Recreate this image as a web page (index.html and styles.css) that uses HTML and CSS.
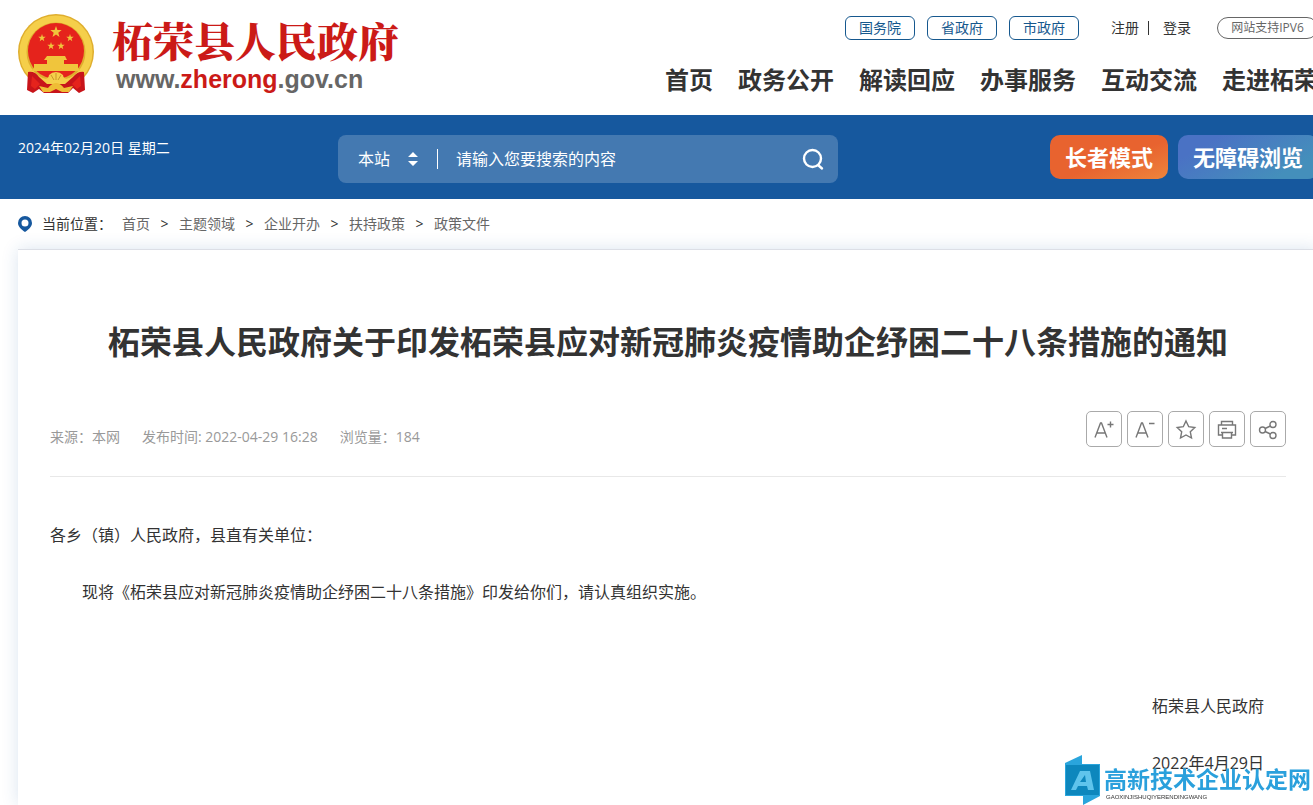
FILE: index.html
```html
<!DOCTYPE html>
<html lang="zh-CN">
<head>
    <meta charset="UTF-8">
    <meta name="viewport" content="width=device-width, initial-scale=1.0">
    <title>柘荣县人民政府</title>
    <link rel="stylesheet" href="styles.css">
</head>
<body>
    <header class="header wrap">
        <a class="logo" href="#">
            <svg class="emblem" viewBox="0 0 76 80" width="76" height="80" aria-hidden="true">
                <defs>
                    <path id="star" d="M0-6 1.4-1.9 5.7-1.9 2.3.7 3.5 4.9 0 2.4-3.5 4.9-2.3.7-5.7-1.9-1.4-1.9z"/>
                </defs>
                <circle cx="38" cy="38" r="38" fill="#dfae2e"/>
                <circle cx="38" cy="38" r="33" fill="none" stroke="#f5cf4a" stroke-width="7"/>
                <circle cx="38" cy="37" r="28" fill="#e5231c"/>
                <g fill="#f0c53c">
                    <use href="#star" transform="translate(38 18)"/>
                    <use href="#star" transform="translate(24 24) scale(.65)"/>
                    <use href="#star" transform="translate(52 24) scale(.65)"/>
                    <use href="#star" transform="translate(33 32) scale(.65)"/>
                    <use href="#star" transform="translate(43 32) scale(.65)"/>
                    <path d="M29 42H47L49 46H46V50H60V54L63 57H13L16 54V50H29V46H26z"/>
                </g>
                <path fill="#c8141a" d="M10 58Q17 57 21 63L29 70H47L55 63Q60 57 66 58L67 76 61 79 55 74 50 79H26L21 75 15 79 9 76z"/>
                <path fill="#e5231c" d="M14 62 22 70 17 75 13 72zM62 62 54 70 59 75 63 72z"/>
                <path fill="#f5cf4a" d="M21 62Q30 68 31 61Q34 58 38 58Q42 58 45 61Q46 68 55 62L46 69H30z"/>
                <path fill="#efbd35" d="M21 72 30 74Q34 69 38 69Q42 69 46 74L55 72 51 78H44L38 75 32 78H25z"/>
                <path fill="none" stroke="#c9952a" d="M38 59V66M33 61 36 66M43 61 40 66"/>
            </svg>
            <span class="logo-text">
                <span class="logo-name">柘荣县人民政府</span>
                <span class="logo-url">www.<em>zherong</em>.gov.cn</span>
            </span>
        </a>
        <div class="header-right">
            <div class="top-links">
                <a class="gov-link" href="#">国务院</a>
                <a class="gov-link" href="#">省政府</a>
                <a class="gov-link" href="#">市政府</a>
                <div class="account">
                    <a href="#">注册</a>
                    <a href="#">登录</a>
                </div>
                <a class="ipv6" href="#">网站支持IPV6</a>
            </div>
            <nav class="nav">
                <a href="#">首页</a>
                <a href="#">政务公开</a>
                <a href="#">解读回应</a>
                <a href="#">办事服务</a>
                <a href="#">互动交流</a>
                <a href="#">走进柘荣</a>
            </nav>
        </div>
    </header>

    <div class="bar">
        <div class="bar-inner wrap">
            <div class="date">2024年02月20日 星期二</div>
            <form class="search">
                <select class="search-scope" aria-label="搜索范围">
                    <option>本站</option>
                </select>
                <svg class="search-arrows" viewBox="0 0 10 14" width="10" height="14" aria-hidden="true">
                    <path fill="#fff" d="M5 0 10 5H0zM5 14 10 9H0z"/>
                </svg>
                <input class="search-input" type="text" placeholder="请输入您要搜索的内容" aria-label="搜索内容">
                <button class="search-btn" type="submit" aria-label="搜索">
                    <svg viewBox="0 0 24 24" width="24" height="24" fill="none" stroke="#fff" stroke-width="2.4" stroke-linecap="round">
                        <circle cx="10.500" cy="11.500" r="8.500"/>
                        <path d="M16 18 20 21.500"/>
                    </svg>
                </button>
            </form>
            <div class="modes">
                <button class="mode mode-elder" type="button">长者模式</button>
                <button class="mode mode-access" type="button">无障碍浏览</button>
            </div>
        </div>
    </div>

    <nav class="crumbs wrap" aria-label="当前位置">
        <svg viewBox="0 0 14 16" width="14" height="16" aria-hidden="true">
            <path fill="#16589e" fill-rule="evenodd" d="M7 0a7 7 0 0 0-7 7C0 11 4 14 7 16 10 14 14 11 14 7A7 7 0 0 0 7 0zM7 3.500a3.500 3.500 0 1 1 0 7 3.500 3.500 0 0 1 0-7z"/>
        </svg>
        <span class="crumbs-label">当前位置：</span>
        <a href="#">首页</a><span class="sep">&gt;</span>
        <a href="#">主题领域</a><span class="sep">&gt;</span>
        <a href="#">企业开办</a><span class="sep">&gt;</span>
        <a href="#">扶持政策</a><span class="sep">&gt;</span>
        <a href="#">政策文件</a>
    </nav>

    <main class="article wrap">
        <h1>柘荣县人民政府关于印发柘荣县应对新冠肺炎疫情助企纾困二十八条措施的通知</h1>
        <div class="info">
            <div class="meta">
                <span>来源：本网</span>
                <span>发布时间: 2022-04-29 16:28</span>
                <span>浏览量：184</span>
            </div>
            <div class="tools">
                <button type="button" aria-label="放大字体">
                    <svg viewBox="0 0 24 24"><path d="M3 20.500 8.500 6H9.500L15 20.500M5 16H13M15.500 7.500H21.500M18.500 4.500V10.500"/></svg>
                </button>
                <button type="button" aria-label="缩小字体">
                    <svg viewBox="0 0 24 24"><path d="M3 20.500 8.500 6H9.500L15 20.500M5 16H13M16 6.500H21.500"/></svg>
                </button>
                <button type="button" aria-label="收藏">
                    <svg viewBox="0 0 24 24"><path d="M12 4 14.700 9.700 20.800 10.500 16.300 14.800 17.500 21 12 18 6.500 21 7.700 14.800 3.200 10.500 9.300 9.700z"/></svg>
                </button>
                <button type="button" aria-label="打印">
                    <svg viewBox="0 0 24 24"><path d="M6.500 8V4.500H17.500V8M7 18H3.500V8H20.500V18H17M6 15.500H18M7.500 15.500V21H16.500V15.500M7 11.500H12"/></svg>
                </button>
                <button type="button" aria-label="分享">
                    <svg viewBox="0 0 24 24"><circle cx="6.500" cy="13" r="3"/><circle cx="17" cy="7.500" r="3"/><circle cx="17" cy="18.500" r="3"/><path d="M9.100 11.500 14.400 9M9.100 14.500 14.400 17"/></svg>
                </button>
            </div>
        </div>
        <div class="content">
            <p>各乡（镇）人民政府，县直有关单位：</p>
            <p class="indent">现将《柘荣县应对新冠肺炎疫情助企纾困二十八条措施》印发给你们，请认真组织实施。</p>
            <div class="sign">
                <p>柘荣县人民政府</p>
                <p>2022年4月29日</p>
            </div>
        </div>
    </main>

    <div class="watermark">
        <svg viewBox="0 0 35 50" width="35" height="50" aria-hidden="true">
            <path fill="#2aa5dc" d="M0 8 17 0V9H35V41L18 50V41H0z"/>
            <path fill="#0d87bd" d="M1 10H34V40H1z"/>
            <path fill="#5fc4ec" fill-rule="evenodd" d="M6 35 15 16H25L29 35H23L22 31H13L11 35zM15 27H21L20 20z"/>
        </svg>
        <div class="watermark-text">
            <strong>高新技术企业认定网</strong>
            <small>GAOXINJISHUQIYERENDINGWANG</small>
        </div>
    </div>
</body>
</html>
```

FILE: styles.css
```css
* {
    box-sizing: border-box;
    margin: 0;
    padding: 0;
}
body {
    font-family: "Open Sans", "Noto Sans CJK SC", sans-serif;
    font-size: 14px;
    line-height: 20px;
    color: #333;
    background: #fff;
    overflow-x: hidden;
}
a {
    color: inherit;
    text-decoration: none;
}
button, input, select {
    font: inherit;
    color: inherit;
    border: none;
    background: none;
}
button {
    cursor: pointer;
}
.wrap {
    min-width: 1300px;
    margin: 0 18px;
}

/* header */
.header {
    display: flex;
    justify-content: space-between;
    height: 115px;
}
.logo {
    display: flex;
    gap: 18px;
    padding-top: 14px;
}
.logo-text {
    display: flex;
    flex-direction: column;
}
.logo-name {
    font-family: "Noto Serif CJK SC", "Noto Sans CJK SC", serif;
    font-size: 41px;
    font-weight: 900;
    line-height: 52px;
    color: #cb1a17;
}
.logo-url {
    padding-left: 4px;
    font-family: "Liberation Sans", sans-serif;
    font-size: 25px;
    font-weight: bold;
    line-height: 26px;
    color: #666;
}
.logo-url em {
    font-style: normal;
    color: #cb1a17;
}
.header-right {
    display: flex;
    flex-direction: column;
    align-items: flex-end;
    gap: 22px;
    padding-top: 16px;
}
.top-links {
    display: flex;
    align-items: center;
    gap: 12px;
}
.gov-link {
    width: 70px;
    border: 1px solid #16588e;
    border-radius: 6px;
    line-height: 22px;
    text-align: center;
    color: #16588e;
}
.account {
    display: flex;
    align-items: center;
    margin: 0 14px 0 20px;
}
.account a + a {
    margin-left: 9px;
    padding-left: 14px;
    border-left: 1px solid #333;
    line-height: 14px;
}
.ipv6 {
    width: 101px;
    border: 1px solid #666;
    border-radius: 11px;
    font-size: 12px;
    line-height: 20px;
    text-align: center;
    color: #666;
}
.nav {
    display: flex;
    gap: 25px;
    font-size: 24px;
    font-weight: bold;
    line-height: 36px;
}

/* blue bar */
.bar {
    background: #16589e;
    color: #fff;
}
.bar-inner {
    display: flex;
    align-items: flex-start;
    height: 84px;
    padding-top: 20px;
}
.date {
    width: 320px;
    line-height: 26px;
}
.search {
    display: flex;
    align-items: center;
    width: 500px;
    height: 48px;
    padding: 0 12px 0 20px;
    border-radius: 8px;
    background: rgba(255, 255, 255, 0.2);
    font-size: 16px;
}
.search-scope {
    width: 50px;
    appearance: none;
}
.search-input {
    flex: 1;
    height: 20px;
    margin-left: 19px;
    padding-left: 18px;
    border-left: 1px solid #fff;
    outline: none;
}
.search-input::placeholder {
    color: #fff;
    opacity: 1;
}
.search-btn {
    height: 24px;
}
.modes {
    display: flex;
    gap: 10px;
    margin-left: auto;
}
.mode {
    height: 44px;
    padding: 0 15px;
    border-radius: 10px;
    font-size: 22px;
    font-weight: bold;
}
.mode-elder {
    background: linear-gradient(160deg, #e8632f 55%, #ee853c);
}
.mode-access {
    background: linear-gradient(150deg, #4a72c4 20%, #448fbb 80%);
}

/* breadcrumb */
.crumbs {
    display: flex;
    align-items: center;
    gap: 10px;
    height: 50px;
    color: #666;
}
.crumbs span {
    color: #333;
}
.crumbs .sep {
    width: 9px;
    text-align: center;
}

/* article */
.article {
    min-height: calc(100vh - 249px);
    padding: 68px 32px 0;
    border-top: 1px solid #dcdfe6;
    background: #fff;
    box-shadow: 0 0 16px rgba(22, 88, 158, 0.16);
}
.article h1 {
    font-size: 32px;
    line-height: 48px;
    text-align: center;
}
.info {
    display: flex;
    justify-content: space-between;
    align-items: center;
    margin-top: 45px;
    padding-bottom: 29px;
    border-bottom: 1px solid #e8e8e8;
}
.meta {
    display: flex;
    gap: 22px;
    padding-top: 16px;
    color: #999;
}
.tools {
    display: flex;
    gap: 5px;
}
.tools button {
    display: flex;
    align-items: center;
    justify-content: center;
    width: 36px;
    height: 36px;
    border: 1px solid #aaa;
    border-radius: 5px;
}
.tools svg {
    width: 24px;
    height: 24px;
    fill: none;
    stroke: #777;
    stroke-width: 1.4;
}
.content {
    padding-top: 42px;
    font-size: 16px;
    line-height: 32px;
}
.content p {
    margin-bottom: 25px;
}
.indent {
    text-indent: 2em;
}
.sign {
    padding: 57px 22px 0 0;
    text-align: right;
}
.sign p:last-child {
    margin-bottom: 0;
}

/* site mark over the lower right corner */
.watermark {
    position: fixed;
    right: 2px;
    bottom: 0;
    display: flex;
    gap: 4px;
}
.watermark-text {
    display: flex;
    flex-direction: column;
    padding-top: 11px;
    font-family: "Liberation Sans", "Noto Sans CJK SC", sans-serif;
}
.watermark strong {
    font-size: 23px;
    line-height: 28px;
    color: #2aa0dc;
}
.watermark small {
    padding-left: 2px;
    font-size: 6px;
    line-height: 6px;
}
```
